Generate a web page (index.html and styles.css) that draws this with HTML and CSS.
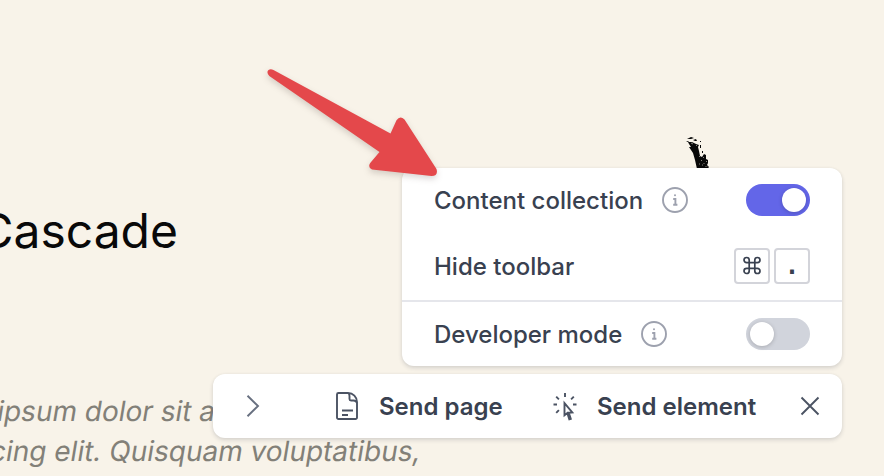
FILE: index.html
```html
<!DOCTYPE html>
<html lang="en">
<head>
<meta charset="utf-8">
<title>Cascade</title>
<link rel="stylesheet" href="styles.css">
</head>
<body>
<main class="page">
  <h1 class="title"><span>Cascade</span></h1>
  <p class="intro"><span class="line first">ipsum dolor sit a</span><span class="line second">cing elit. Quisquam voluptatibus,</span></p>
</main>
<svg class="ink" viewBox="0 0 30 34" width="30" height="34">
  <path d="M3 6l4 0 4 2 3 1-1 2 1 4 1 5 2 1 2-3 2 1 0 4 2 1v3l-1 2 2 4H12L10 24 8 17 4 11l2 0-2-3z"/>
  <path d="M2 3l4-2 3 1-3 1zM1 6l2-1 1 1zM8 4l3-1 1 2-2 0zM15 9h1v3h-1zM17 15h1v2h-1zM15 5h1v1h-1zM22 29l2 2-1 1z"/>
  <path class="grain" d="M6 7l2 1M11 9l1 1M14 20l1 1M18 21l1 1M16 25l1-1M21 25l1 1M17 29h1M21 30v1M14 28h1M19 27v1"/>
</svg>
<div class="widget">
  <section class="menu">
    <div class="row"><span>Content collection</span>
      <svg class="info" viewBox="0 0 26 26"><circle cx="13" cy="13" r="12"/><path d="M11.200 12h2.200v5.600M11.200 17.700h4.200"/><circle class="dot" cx="13" cy="8.200" r="1"/></svg>
      <span class="switch on"></span></div>
    <div class="row keys-row"><span>Hide toolbar</span>
      <span class="keys"><kbd><svg viewBox="0 0 20 20" width="20" height="20"><path d="M7.200 6.700h5.600v5.600H7.200zM7.200 6.700H4.600A2.600 2.600 0 1 1 7.200 4.100zM12.800 6.700V4.100a2.600 2.600 0 1 1 2.600 2.600zM7.200 12.300v2.600a2.600 2.600 0 1 1-2.600-2.600zM12.800 12.300h2.600a2.600 2.600 0 1 1-2.600 2.600z"/></svg></kbd><kbd><span class="period">.</span></kbd></span></div>
    <div class="row developer"><span>Developer mode</span>
      <svg class="info" viewBox="0 0 26 26"><circle cx="13" cy="13" r="12"/><path d="M11.200 12h2.200v5.600M11.200 17.700h4.200"/><circle class="dot" cx="13" cy="8.200" r="1"/></svg>
      <span class="switch"></span></div>
  </section>
  <nav class="toolbar">
    <svg class="chevron" viewBox="0 0 14 24"><path d="M1.500 1.800L12 12 1.500 22.200"/></svg>
    <svg class="doc" viewBox="0 0 24 30"><path d="M13 2H3.500A1.500 1.500 0 0 0 2 3.500v23A1.500 1.500 0 0 0 3.500 28h17a1.500 1.500 0 0 0 1.500-1.500V11C22 6 18 2 13 2c1 .5 1.500 1.500 1.500 3v3A1.500 1.500 0 0 0 16 9.500h2.500C20.500 9.500 21.500 10.500 22 12M7 19.500h11M7 24h6"/></svg>
    <span class="action page-action">Send page</span>
    <svg class="click" viewBox="0 0 26 30"><path d="M13 2v4M4.200 5.600l2.700 2.700M21.800 5.600l-2.700 2.700M1.500 13.500H5M21 13.500h3.500M6.900 19.200l-2.700 2.700M12.500 12.200v12l2.800-2.200 2 6.300 1.500-.5-2-6.100 3.500-.3z"/></svg>
    <span class="action element-action">Send element</span>
    <svg class="close" viewBox="0 0 20 20"><path d="M1.500 1.500l17 17M18.500 1.500l-17 17"/></svg>
  </nav>
</div>
<svg class="arrow" viewBox="0 0 190 125" width="190" height="125"><path d="M13.500 10L130.500 73.500 136.500 60.300Q140 55 144.500 59.500L176.500 109Q178.500 116 171.500 116L112 109.500Q107.500 107.500 110.200 103L119.500 92 9.300 16Q6 12.500 8.500 10Q10.500 8.500 13.500 10Z"/></svg>
</body>
</html>
```

FILE: styles.css
```css
* { box-sizing: border-box; }
body {
  margin: 0;
  width: 884px;
  height: 476px;
  overflow: hidden;
  position: relative;
  background: #f8f3e9;
  font-family: Inter, "Liberation Sans", sans-serif;
}
.page { padding-top: 201px; }
.title {
  margin: 0;
  width: 178px;
  display: flex;
  justify-content: flex-end;
  font-size: 48px;
  line-height: 60px;
  font-weight: 400;
  color: #090909;
}
.intro {
  margin: 130px 0 0;
  font-size: 28px;
  line-height: 40px;
  color: #828078;
  white-space: nowrap;
}
.line { display: flex; justify-content: flex-end; transform: skewX(-9.4deg); }
.first { width: 215.5px; }
.second { width: 421px; }
.ink { position: absolute; left: 685px; top: 136px; fill: #080808; }
.grain { fill: none; stroke: #aaa69d; stroke-width: .8; }
.widget {
  position: absolute;
  top: 168px;
  right: 42px;
  width: 629px;
  display: flex;
  flex-direction: column;
  align-items: flex-end;
  gap: 8px;
  color: #394150;
}
.menu, .toolbar {
  background: #fff;
  border-radius: 12px;
  box-shadow: 0 2px 4px rgba(40, 45, 60, .16), 0 0 3px rgba(40, 45, 60, .04);
}
.menu { width: 440px; height: 198px; font-size: 24px; font-weight: 500; }
.row { display: flex; align-items: center; height: 64px; padding: 0 32px; }
.keys-row { height: 68px; }
.developer { height: 66px; border-top: 2px solid #e5e6eb; }
.info {
  width: 26px;
  height: 26px;
  margin-left: 19px;
  fill: none;
  stroke: #9da1ae;
  stroke-width: 1.9;
}
.info .dot { fill: #9da1ae; stroke: none; }
.switch {
  width: 64px;
  height: 32px;
  margin-left: auto;
  padding: 4px;
  display: flex;
  border-radius: 16px;
  background: #d1d4dc;
}
.switch::after {
  content: "";
  width: 24px;
  height: 24px;
  border-radius: 50%;
  background: #fff;
  box-shadow: 0 1px 4px rgba(0, 0, 0, .2);
}
.on { background: #6366e8; justify-content: flex-end; }
.keys { display: flex; gap: 4px; margin-left: auto; }
kbd {
  width: 36px;
  height: 36px;
  display: flex;
  align-items: center;
  justify-content: center;
  border: 2px solid #d3d4da;
  border-radius: 4px;
  font: 700 24px "DejaVu Sans Mono", monospace;
}
kbd svg { fill: none; stroke: #394150; stroke-width: 1.7; }
.toolbar {
  width: 629px;
  height: 64px;
  padding: 0 22px 0 33px;
  display: flex;
  align-items: center;
  font-size: 24px;
  font-weight: 600;
}
.toolbar svg { flex: none; fill: none; stroke: #4b5363; stroke-width: 1.9; }
.toolbar .chevron { width: 14px; height: 24px; stroke: #687080; }
.doc { width: 24px; height: 30px; margin-left: 75px; }
.click { width: 26px; height: 30px; }
.action { white-space: nowrap; }
.page-action { width: 173px; margin-left: 20px; }
.element-action { width: 160px; margin-left: 19px; }
.close { width: 20px; height: 20px; margin-left: auto; }
.arrow {
  position: absolute;
  left: 260px;
  top: 60px;
  fill: #e4484b;
  filter: drop-shadow(0 3px 3px rgba(50, 30, 20, .18));
}
```
